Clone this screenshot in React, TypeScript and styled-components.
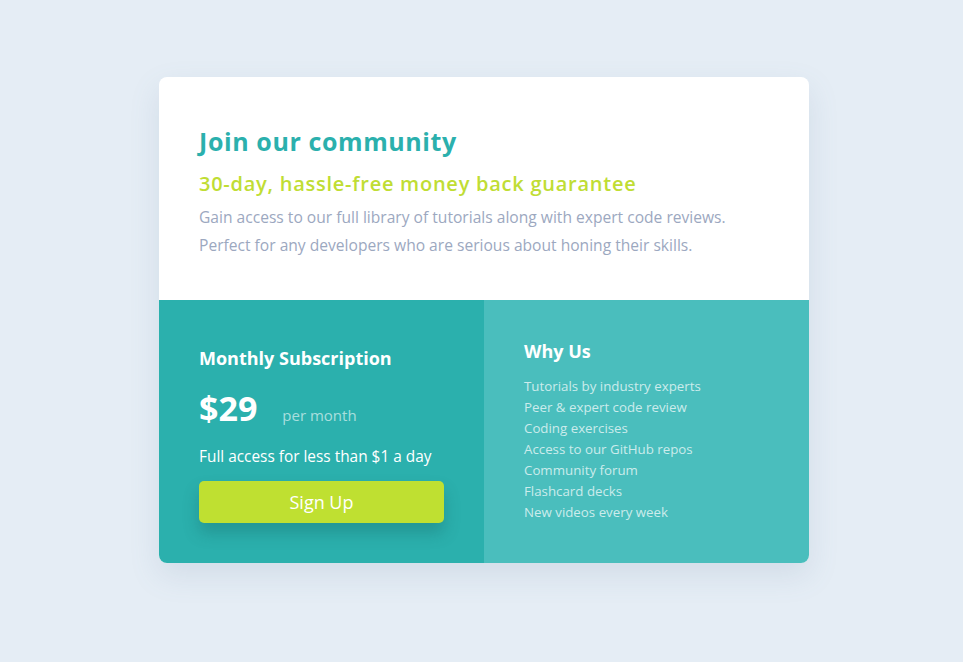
import React from "react";
import styled, { createGlobalStyle } from "styled-components";

const Global = createGlobalStyle`
  html, body { margin: 0; padding: 0; }
  body {
    background: #e5edf5;
    font-family: "Open Sans", "Noto Sans", sans-serif;
    -webkit-font-smoothing: antialiased;
  }
`;

const Page = styled.div`
  min-height: 662px;
  display: flex;
  justify-content: center;
  padding: 77px 0 0 5px;
  box-sizing: border-box;
`;

const Card = styled.div`
  width: 650px;
  height: 486px;
  border-radius: 8px;
  overflow: hidden;
  background: #fff;
  box-shadow: 0 12px 30px rgba(100, 130, 160, 0.15);
  display: flex;
  flex-direction: column;
`;

const Top = styled.section`
  height: 223px;
  box-sizing: border-box;
  padding: 48px 40px 0;
`;

const Title = styled.h1`
  margin: 0;
  color: #2bb0ad;
  font-size: 25px;
  font-weight: 700;
  line-height: 32px;
  letter-spacing: 0.6px;
`;

const Subtitle = styled.h2`
  margin: 14px 0 0;
  color: #c0dd34;
  font-size: 20px;
  font-weight: 600;
  line-height: 26px;
  letter-spacing: 0.75px;
`;

const Body = styled.p`
  margin: 6px 0 0;
  color: #9ca8bf;
  font-size: 15.6px;
  line-height: 28px;
`;

const Bottom = styled.div`
  flex: 1;
  display: grid;
  grid-template-columns: 325px 325px;
`;

const Panel = styled.section<{ $light?: boolean }>`
  background: ${(p) => (p.$light ? "#4abebd" : "#2bb0ad")};
  color: #fff;
  box-sizing: border-box;
  padding: ${(p) => (p.$light ? "38px 40px 0" : "45px 40px 0")};
`;

const PanelTitle = styled.h3<{ $size?: number }>`
  margin: 0;
  font-size: ${(p) => p.$size ?? 18}px;
  font-weight: 700;
  line-height: 26px;
`;

const PriceRow = styled.div`
  display: flex;
  align-items: baseline;
  gap: 25px;
  margin-top: 16px;
`;

const Price = styled.span`
  font-size: 34px;
  font-weight: 700;
  line-height: 42px;
`;

const Per = styled.span`
  font-size: 15px;
  color: rgba(255, 255, 255, 0.6);
`;

const Access = styled.p`
  margin: 16px 0 0;
  font-size: 15.4px;
  font-weight: 500;
  line-height: 24px;
`;

const Button = styled.button`
  display: block;
  margin-top: 12px;
  width: 245px;
  height: 42px;
  border: none;
  border-radius: 5px;
  background: #bfe031;
  color: #fff;
  font-family: inherit;
  font-size: 18px;
  font-weight: 500;
  box-shadow: 0 10px 16px rgba(20, 90, 90, 0.3);
  cursor: pointer;
`;

const List = styled.ul`
  list-style: none;
  margin: 12px 0 0;
  padding: 0;
`;

const Item = styled.li`
  font-size: 13.3px;
  line-height: 21px;
  color: rgba(255, 255, 255, 0.72);
`;

const reasons = [
  "Tutorials by industry experts",
  "Peer & expert code review",
  "Coding exercises",
  "Access to our GitHub repos",
  "Community forum",
  "Flashcard decks",
  "New videos every week",
];

export default function App() {
  return (
    <>
      <Global />
      <Page>
        <Card>
          <Top>
            <Title>Join our community</Title>
            <Subtitle>30-day, hassle-free money back guarantee</Subtitle>
            <Body>
              Gain access to our full library of tutorials along with expert code reviews.
              <br />
              Perfect for any developers who are serious about honing their skills.
            </Body>
          </Top>
          <Bottom>
            <Panel>
              <PanelTitle>Monthly Subscription</PanelTitle>
              <PriceRow>
                <Price>$29</Price>
                <Per>per month</Per>
              </PriceRow>
              <Access>Full access for less than $1 a day</Access>
              <Button>Sign Up</Button>
            </Panel>
            <Panel $light>
              <PanelTitle>Why Us</PanelTitle>
              <List>
                {reasons.map((r) => (
                  <Item key={r}>{r}</Item>
                ))}
              </List>
            </Panel>
          </Bottom>
        </Card>
      </Page>
    </>
  );
}
